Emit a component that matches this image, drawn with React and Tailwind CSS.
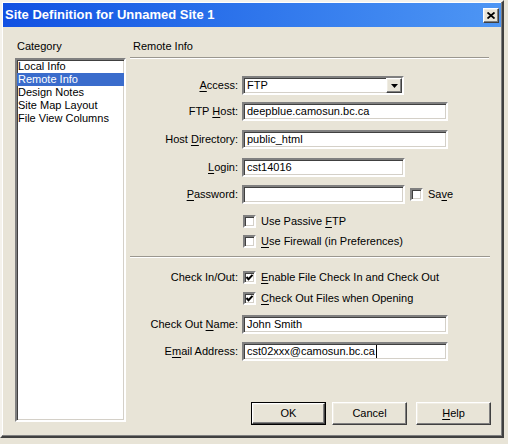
import React from "react";

const sunken =
  "border-2 border-t-[#808080] border-l-[#808080] border-r-white border-b-white shadow-[inset_1px_1px_0_#404040,inset_-1px_-1px_0_#d4d0c8]";
const raised =
  "border border-t-white border-l-white border-r-[#404040] border-b-[#404040] shadow-[inset_-1px_-1px_0_#808080,inset_1px_1px_0_#f0ede4]";

function U({ children }) {
  return <span className="underline underline-offset-[2px]">{children}</span>;
}

function TextBox({ value, width, caret }) {
  return (
    <div
      className={`${sunken} ${width} h-[19px] bg-white flex items-center pl-[3px] text-black whitespace-nowrap`}
    >
      {value}
      {caret && <span className="inline-block w-px h-[13px] bg-black ml-[1px]" />}
    </div>
  );
}

function CheckBox({ checked }) {
  return (
    <div className={`${sunken} w-[13px] h-[13px] bg-white flex items-center justify-center shrink-0`}>
      {checked && (
        <svg width="9" height="9" viewBox="0 0 9 9" className="block">
          <polyline points="1.5,4 3.5,6.2 7.5,1.8" fill="none" stroke="#000" strokeWidth="2" />
        </svg>
      )}
    </div>
  );
}

function Row({ label, children, className = "" }) {
  return (
    <div className={`flex items-center ${className}`}>
      <div className="w-[108px] text-right whitespace-nowrap">{label}</div>
      <div className="ml-[4px] flex items-center">{children}</div>
    </div>
  );
}

function CheckRow({ checked, label, className = "" }) {
  return (
    <div className={`flex items-center pl-[113px] h-[13px] ${className}`}>
      <CheckBox checked={checked} />
      <span className="ml-[5px] whitespace-nowrap">{label}</span>
    </div>
  );
}

function Button({ children, isDefault }) {
  return (
    <div
      className={`w-[75px] h-[23px] flex items-center justify-center ${
        isDefault ? "border border-black" : ""
      }`}
    >
      <div className={`${raised} w-full h-full flex items-center justify-center bg-[#e8e4d7]`}>
        {children}
      </div>
    </div>
  );
}

const categories = ["Local Info", "Remote Info", "Design Notes", "Site Map Layout", "File View Columns"];

export default function App() {
  return (
    <div className="w-[508px] h-[444px] bg-[#e8e4d7] font-['Liberation_Sans',Arial,sans-serif] text-[11px] leading-[13px] text-black">
      <div className="w-[504px] h-[438px] border-2 border-t-[#f4f2ec] border-l-[#f4f2ec] border-r-[#404040] border-b-[#404040] shadow-[inset_-1px_-1px_0_#808080,inset_1px_1px_0_#ffffff] p-px flex flex-col">
        {/* title bar */}
        <div className="h-[24px] bg-gradient-to-r from-[#1150e2] to-[#4e96f4] flex items-center justify-between pl-[2px] pr-[2px]">
          <span className="text-white font-bold text-[13px] leading-[16px] whitespace-nowrap">
            Site Definition for Unnamed Site 1
          </span>
          <div className={`${raised} w-[16px] h-[15px] bg-[#e8e4d7] flex items-center justify-center`}>
            <svg width="8" height="7" viewBox="0 0 8 7" className="block">
              <path d="M0.5 0.5 L7.5 6.5 M7.5 0.5 L0.5 6.5" stroke="#000" strokeWidth="1.8" />
            </svg>
          </div>
        </div>

        {/* body */}
        <div className="flex flex-1 pt-[13px] pl-[12px]">
          {/* category list */}
          <div className="w-[111px] flex flex-col pb-[13px]">
            <div className="pl-[2px] h-[13px]">Category</div>
            <div className={`${sunken} mt-[5px] flex-1 bg-white flex flex-col`}>
              {categories.map((c) => (
                <div
                  key={c}
                  className={`h-[13px] pl-[1px] whitespace-nowrap ${
                    c === "Remote Info" ? "bg-[#3a6ccc] text-white" : ""
                  }`}
                >
                  {c}
                </div>
              ))}
            </div>
          </div>

          {/* remote info panel */}
          <div className="ml-[4px] w-[361px] flex flex-col">
            <div className="pl-[3px] h-[13px]">Remote Info</div>
            <div className="mt-[4px] w-[359px] border-t border-t-[#9a978f] border-b border-b-white" />

            <Row className="mt-[17px]" label={<><U>A</U>ccess:</>}>
              <div className={`${sunken} w-[162px] h-[19px] bg-white flex items-center justify-between pl-[3px]`}>
                <span>FTP</span>
                <div className={`${raised} w-[16px] h-[15px] bg-[#e8e4d7] flex items-center justify-center`}>
                  <svg width="7" height="4" viewBox="0 0 7 4" className="block">
                    <path d="M0 0 H7 L3.5 4 Z" fill="#000" />
                  </svg>
                </div>
              </div>
            </Row>

            <Row className="mt-[7px]" label={<>FTP <U>H</U>ost:</>}>
              <TextBox width="w-[206px]" value="deepblue.camosun.bc.ca" />
            </Row>

            <Row className="mt-[9px]" label={<>Host <U>D</U>irectory:</>}>
              <TextBox width="w-[206px]" value="public_html" />
            </Row>

            <Row className="mt-[9px]" label={<><U>L</U>ogin:</>}>
              <TextBox width="w-[163px]" value="cst14016" />
            </Row>

            <Row className="mt-[8px]" label={<><U>P</U>assword:</>}>
              <TextBox width="w-[163px]" value="" />
              <div className="ml-[5px]">
                <CheckBox />
              </div>
              <span className="ml-[5px]">
                Sa<U>v</U>e
              </span>
            </Row>

            <CheckRow className="mt-[11px]" label={<>Use Passive <U>F</U>TP</>} />
            <CheckRow className="mt-[7px]" label={<><U>U</U>se Firewall (in Preferences)</>} />

            <div className="mt-[8px] w-[360px] border-t border-t-[#9a978f] border-b border-b-white" />

            <div className="mt-[13px] flex items-center h-[13px]">
              <div className="w-[108px] text-right">Check In/Out:</div>
              <div className="ml-[5px] flex items-center">
                <CheckBox checked />
                <span className="ml-[5px] whitespace-nowrap">
                  <U>E</U>nable File Check In and Check Out
                </span>
              </div>
            </div>
            <CheckRow checked className="mt-[8px]" label={<><U>C</U>heck Out Files when Opening</>} />

            <Row className="mt-[10px]" label={<>Check Out <U>N</U>ame:</>}>
              <TextBox width="w-[206px]" value="John Smith" />
            </Row>

            <Row className="mt-[8px]" label={<>E<U>m</U>ail Address:</>}>
              <TextBox width="w-[206px]" value="cst02xxx@camosun.bc.ca" caret />
            </Row>

            <div className="mt-[41px] flex justify-end">
              <div className="flex">
                <Button isDefault>OK</Button>
                <div className="ml-[6px]">
                  <Button>Cancel</Button>
                </div>
                <div className="ml-[9px]">
                  <Button>
                    <U>H</U>elp
                  </Button>
                </div>
              </div>
            </div>
          </div>
        </div>
      </div>
    </div>
  );
}
